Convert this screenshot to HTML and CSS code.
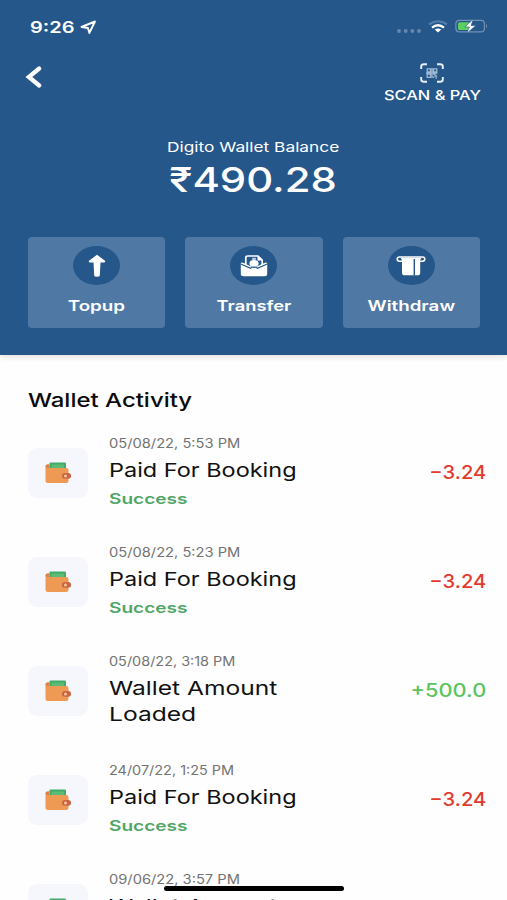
FILE: index.html
```html
<!DOCTYPE html>
<html lang="en">
<head>
<meta charset="utf-8">
<title>Digito Wallet</title>
<link rel="stylesheet" href="styles.css">
</head>
<body>
<svg class="defs" aria-hidden="true">
  <symbol id="wallet" viewBox="0 0 28 24">
    <rect x="5.500" y="1.500" width="16.500" height="12" rx="1" fill="#43aa69"/>
    <rect x="7.500" y="3.500" width="12.500" height="6" fill="#5dbb78"/>
    <path d="M1.500 5.500Q1.500 3.500 3.500 3.500H5.500V7H22Q24.500 7 24.500 9V19.500Q24.500 22 22 22H4Q1.500 22 1.500 19.500Z" fill="#ee9a55"/>
    <path d="M1.500 5.500Q2 7 4.500 7H5.500V3.500H3.500Q1.500 3.500 1.500 5.500Z" fill="#d98246"/>
    <rect x="18" y="12" width="9" height="5.800" rx="2.700" fill="#c96542"/>
    <circle cx="21.500" cy="14.900" r="1.500" fill="#f5c59b"/>
  </symbol>
</svg>
<header class="header">
  <div class="status">
    <span class="time wide">9:26</span>
    <svg class="loc" width="17" height="15" viewBox="0 0 17 15"><path d="M1.500 7 15 1.500 9.300 13 8 8Z" fill="none" stroke="#fff" stroke-width="1.900" stroke-linejoin="round"/></svg>
    <div class="indicators">
      <svg width="24" height="6" viewBox="0 0 24 6" fill="#6788af"><circle cx="2" cy="3" r="1.900"/><circle cx="8.700" cy="3" r="1.900"/><circle cx="15.300" cy="3" r="1.900"/><circle cx="22" cy="3" r="1.900"/></svg>
      <svg width="20" height="13" viewBox="0 0 20 13" fill="none"><path d="M1 4.500Q10-2 19 4.500" stroke="#557da8" stroke-width="2.200"/><path d="M4 7.600Q10 3 16 7.600" stroke="#fff" stroke-width="2.400"/><path d="M6.800 9.500Q10 7.600 13.200 9.500L10 12.500Z" fill="#fff"/></svg>
      <svg width="34" height="15" viewBox="0 0 34 15"><rect x=".9" y="1.400" width="28.500" height="11.500" rx="3.500" fill="none" stroke="#7292b5" stroke-width="1.200"/><path d="M31 5Q33 7 31 9.300Z" fill="#7292b5"/><rect x="3" y="3.300" width="12" height="7.700" rx="1.500" fill="#5bd05f"/><path d="M18.500 0 9.800 8H14.500L11.500 14.500 21 6.500H16Z" fill="#fff" stroke="#25578b" stroke-width=".6"/></svg>
    </div>
  </div>
  <div class="nav">
    <svg class="back" width="17" height="22" viewBox="0 0 17 22"><path d="M14.200 2.500 3.800 11 14.200 19.500" fill="none" stroke="#fff" stroke-width="4.200" stroke-linecap="round" stroke-linejoin="miter"/></svg>
    <div class="scan">
      <svg width="24" height="20" viewBox="0 0 24 20" fill="none" stroke="#e8eff7"><path d="M1.200 6V3.500Q1.200 1.200 4 1.200H7M17 1.200H20Q22.800 1.200 22.800 3.500V6M22.800 14V16.500Q22.800 18.800 20 18.800H17M7 18.800H4Q1.200 18.800 1.200 16.500V14" stroke-width="1.900"/><path d="M7.200 5.800H10.500V9H7.200ZM13.500 5.800H16.800V9H13.500ZM7.200 11.200H10.500V14.400H7.200ZM13 11.200H15V13H17.200M13.500 15V13.500M17 15H15.500M12 5V15M6 10.200H17.500" stroke="#9fb8d4" stroke-width="1.300"/></svg>
      <span class="scan-text wide">SCAN &amp; PAY</span>
    </div>
  </div>
  <div class="balance">
    <span class="balance-label wide">Digito Wallet Balance</span>
    <span class="balance-value wide">₹490.28</span>
  </div>
  <div class="actions">
    <div class="action">
      <div class="disc"><svg width="18" height="24" viewBox="0 0 18 24" fill="#fff"><path d="M9 .8 17.300 7Q17.500 8.500 15.500 8.500H12.500L11.800 21.500Q11.700 22.800 9 22.800Q6.300 22.800 6.200 21.500L5.500 8.500H2.500Q.5 8.500.7 7Z"/></svg></div>
      <span class="action-text topup wide">Topup</span>
    </div>
    <div class="action">
      <div class="disc"><svg width="28" height="22" viewBox="0 0 28 22"><path d="M5.800 10V2.500Q5.800 1 8 1H18L22.200 5V10" fill="none" stroke="#fff" stroke-width="1.700"/><path d="M17.500 1V5.500H22.500Z" fill="#fff"/><rect x="12" y="2.800" width="4" height="2.200" rx=".8" fill="#b9cadd"/><ellipse cx="14" cy="8.500" rx="4.600" ry="3.400" fill="#fff"/><path d="M.8 8.500Q.8 7.500 2 7.500L5 8.500 14 13 23 8.500 26 7.500Q27.200 7.500 27.200 8.500V18.800Q27.200 21.300 24.500 21.300H3.500Q.8 21.300.8 18.800Z" fill="#fff"/><path d="M.8 9 10.500 13.200Q14 10.800 17.500 13.200L27.200 9" fill="none" stroke="#25578b" stroke-width="1.200"/></svg></div>
      <span class="action-text transfer wide">Transfer</span>
    </div>
    <div class="action">
      <div class="disc"><svg width="30" height="20" viewBox="0 0 30 20"><path d="M6 5.200H3.500Q1.200 5.200 1.200 3.100T3.500 1H26.500Q28.800 1 28.800 3.100T26.500 5.200H24" fill="none" stroke="#fff" stroke-width="1.600"/><path d="M4.500 1.800H25.500L24.200 4V17Q24.200 19.300 21.500 19.300H8.800Q6 19.300 6 17V5Q6 3 4.500 1.800Z" fill="#fff"/><path d="M18.300 3V19.500" stroke="#25578b" stroke-width="1.400"/></svg></div>
      <span class="action-text withdraw wide">Withdraw</span>
    </div>
  </div>
</header>
<main class="activity">
  <h1 class="heading"><span class="wide">Wallet Activity</span></h1>
  <article class="row">
    <div class="thumb"><svg width="28" height="24"><use href="#wallet"/></svg></div>
    <div class="info">
      <span class="date wide">05/08/22, 5:53 PM</span>
      <span class="title wide">Paid For Booking</span>
      <span class="state wide">Success</span>
    </div>
    <span class="amount debit wide">−3.24</span>
  </article>
  <article class="row">
    <div class="thumb"><svg width="28" height="24"><use href="#wallet"/></svg></div>
    <div class="info">
      <span class="date wide">05/08/22, 5:23 PM</span>
      <span class="title wide">Paid For Booking</span>
      <span class="state wide">Success</span>
    </div>
    <span class="amount debit wide">−3.24</span>
  </article>
  <article class="row">
    <div class="thumb"><svg width="28" height="24"><use href="#wallet"/></svg></div>
    <div class="info">
      <span class="date short wide">05/08/22, 3:18 PM</span>
      <span class="title loaded wide">Wallet Amount<br>Loaded</span>
    </div>
    <span class="amount credit wide">+500.0</span>
  </article>
  <article class="row">
    <div class="thumb"><svg width="28" height="24"><use href="#wallet"/></svg></div>
    <div class="info">
      <span class="date short wide">24/07/22, 1:25 PM</span>
      <span class="title wide">Paid For Booking</span>
      <span class="state wide">Success</span>
    </div>
    <span class="amount debit wide">−3.24</span>
  </article>
  <article class="row">
    <div class="thumb"><svg width="28" height="24"><use href="#wallet"/></svg></div>
    <div class="info">
      <span class="date wide">09/06/22, 3:57 PM</span>
      <span class="title loaded wide">Wallet Amount</span>
    </div>
  </article>
</main>
<div class="home-bar"></div>
</body>
</html>
```
FILE: styles.css
```css
* { box-sizing: border-box; }
html, body { height: 900px; overflow: hidden; }
body {
  margin: 0;
  position: relative;
  background: #fefefe;
  font-family: Inter, "Liberation Sans", sans-serif;
  color: #111;
}
svg { display: block; flex: none; }
.defs { position: absolute; width: 0; height: 0; }

/* Extended letterforms: each text style sets its own stretch. */
.wide {
  display: block;
  width: max-content;
  white-space: nowrap;
  transform: scaleX(var(--stretch, 1.25));
  transform-origin: left center;
}

.header {
  height: 355px;
  background: #25578b;
  color: #fff;
  box-shadow: 0 1px 6px rgba(60, 40, 30, .18);
}
.status {
  display: flex;
  align-items: center;
  height: 53px;
  padding: 0 18px 0 30px;
}
.time { width: 50px; font-size: 16px; font-weight: 600; }
.loc { margin-top: 1px; }
.indicators {
  display: flex;
  align-items: center;
  gap: 7px;
  margin-left: auto;
}
.indicators svg:first-child { margin-top: 8px; }
.nav {
  display: flex;
  justify-content: space-between;
  height: 84px;
  padding: 10px 26px 0 25px;
}
.back { margin-top: 3px; }
.scan { display: flex; flex-direction: column; align-items: center; width: 98px; }
.scan-text {
  --stretch: 1.2;
  margin-top: 2px;
  font-size: 13.7px;
  font-weight: 500;
  line-height: 20px;
  transform-origin: center;
}
.balance { display: flex; flex-direction: column; align-items: center; }
.balance-label {
  --stretch: 1.265;
  font-size: 13.7px;
  line-height: 20px;
  transform-origin: center;
}
.balance-value {
  --stretch: 1.23;
  font-size: 34px;
  font-weight: 500;
  line-height: 46px;
  transform-origin: center;
}
.actions {
  display: grid;
  grid-template-columns: repeat(3, 1fr);
  gap: 20px;
  margin-top: 34.4px;
  padding: 0 27px 0 28px;
}
.action {
  display: flex;
  flex-direction: column;
  align-items: center;
  height: 90.4px;
  padding-top: 9px;
  border-radius: 4px;
  background: #4f79a4;
}
.disc {
  display: flex;
  align-items: center;
  justify-content: center;
  width: 47px;
  height: 39px;
  border-radius: 50%;
  background: #25578b;
}
.action-text {
  margin-top: 11px;
  font-size: 14.7px;
  font-weight: 600;
  line-height: 20px;
  transform-origin: center;
}
.topup { --stretch: 1.28; }
.withdraw { --stretch: 1.275; }

.activity { padding: 32px 21px 0 28px; }
.heading {
  margin: 0 0 22px;
  font-size: 19.3px;
  font-weight: 500;
  line-height: 26px;
  color: #0a0a0a;
}
.heading .wide { --stretch: 1.243; }
.row {
  display: grid;
  grid-template-columns: 60px 1fr auto;
  column-gap: 21px;
  align-items: start;
  height: 109px;
}
.row:last-child { height: 30px; }
.thumb {
  display: flex;
  align-items: center;
  justify-content: center;
  height: 50px;
  margin-top: 13px;
  border-radius: 9px;
  background: #f5f7fc;
}
.date { --stretch: 1.175; font-size: 12.5px; line-height: 18px; color: #737373; }
.date.short { --stretch: 1.155; }
.title { --stretch: 1.217; margin-top: 4px; font-size: 19.3px; line-height: 26px; }
.title.loaded { --stretch: 1.275; }
.state {
  --stretch: 1.315;
  margin-top: 6px;
  font-size: 14.5px;
  font-weight: 600;
  line-height: 20px;
  color: #50a565;
}
.amount {
  --stretch: 1.18;
  margin-top: 24px;
  font-size: 18.5px;
  font-weight: 500;
  line-height: 26px;
  transform-origin: right center;
}
.debit { --stretch: 1.09; color: #e23b2e; }
.credit { color: #5cc45f; }

.home-bar {
  position: absolute;
  left: 164px;
  bottom: 9px;
  width: 180px;
  height: 5px;
  border-radius: 3px;
  background: #000;
}
```
